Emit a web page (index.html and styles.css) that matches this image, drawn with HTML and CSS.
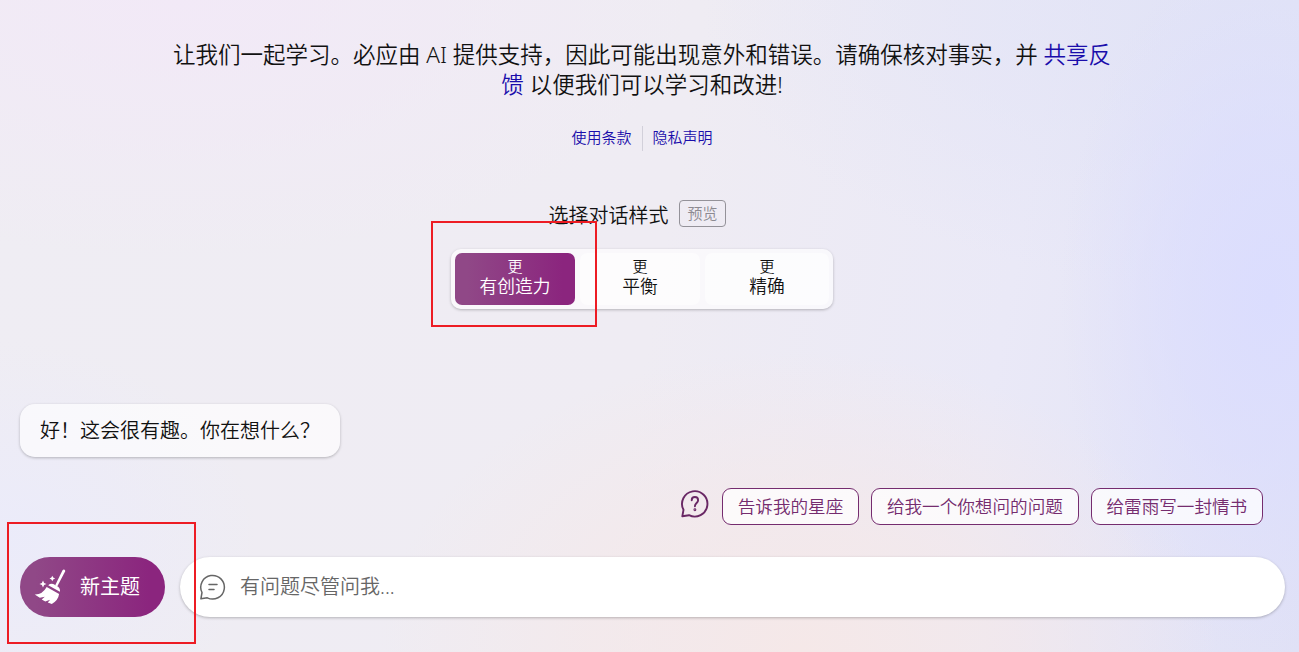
FILE: index.html
```
<!DOCTYPE html>
<html lang="zh-CN">
<head>
    <meta charset="UTF-8">
    <meta name="viewport" content="width=device-width, initial-scale=1.0">
    <title>必应聊天</title>
    <link rel="stylesheet" href="styles.css">
</head>
<body>
    <div class="page">
        <div class="welcome">
            <p class="disclaimer">让我们一起学习。必应由 AI 提供支持，因此可能出现意外和错误。请确保核对事实，并 <a href="#">共享反馈</a> 以便我们可以学习和改进!</p>
            <div class="legal">
                <a href="#">使用条款</a>
                <a href="#">隐私声明</a>
            </div>
            <div class="tone-title">
                <span>选择对话样式</span>
                <span class="preview">预览</span>
            </div>
            <div class="tones">
                <button class="tone active"><span>更</span><strong>有创造力</strong></button>
                <button class="tone"><span>更</span><strong>平衡</strong></button>
                <button class="tone tone-wide"><span>更</span><strong>精确</strong></button>
            </div>
        </div>

        <div class="message">好！这会很有趣。你在想什么？</div>

        <div class="suggestions">
            <svg class="help-icon" width="30" height="30" viewBox="0 0 30 30" fill="none" stroke="#692764" stroke-width="1.9" stroke-linecap="round" stroke-linejoin="round">
                <path d="M2.3 27.3 3.5 20.8A12.7 12.7 0 1 1 9 26.2Z"/>
                <path d="M11.7 11.2c0-4.3 6.4-4.3 6.4 0 0 2.600-3.200 3-3.200 6"/>
                <circle cx="14.9" cy="20.8" r=".5"/>
            </svg>
            <button class="chip">告诉我的星座</button>
            <button class="chip">给我一个你想问的问题</button>
            <button class="chip">给雷雨写一封情书</button>
        </div>

        <div class="bar">
            <button class="new-topic">
                <svg width="32" height="36" viewBox="0 0 32 36" fill="#fff">
                    <path d="M28.4 1.6q1-1.4 2.1-.9t.6 1.9L23.2 17.4l-2-1.2Z"/>
                    <path d="M14.2 16.2q3-2.5 6.5-.5l3 1.8q2.8 2 2.2 5.3Z"/>
                    <path d="M12.7 18.1 25.1 25q-.8 6.3-7.3 9.9l-4-1.5 2.3-2.6-4.8 1.7-3.6-2 3.1-2.8-5 1-5.1-3.2q7.7.3 12-7.4Z"/>
                    <path d="m9 11.5 1.1 2.4 2.4 1.1-2.4 1.1L9 18.5l-1.1-2.4L5.5 15l2.4-1.1Z"/>
                    <path d="m18.3 6.7.9 1.9 1.9.9-1.9.9-.9 1.9-.9-1.9-1.9-.9 1.9-.9Z"/>
                </svg>
                <span>新主题</span>
            </button>
            <div class="input-box">
                <svg width="28" height="28" viewBox="0 0 28 28" fill="none" stroke="#666" stroke-width="1.5" stroke-linecap="round" stroke-linejoin="round">
                    <path d="M1.9 25.8 3 19.5A11.8 11.8 0 1 1 8.3 24.8Z"/>
                    <path d="M10 11.5h8M10 16.5h5"/>
                </svg>
                <span class="placeholder">有问题尽管问我...</span>
            </div>
        </div>

        <div class="marker marker-tone"></div>
        <div class="marker marker-topic"></div>
    </div>
</body>
</html>
```
FILE: styles.css
```
* {
    margin: 0;
    padding: 0;
    box-sizing: border-box;
}

body {
    font-family: "Noto Sans", "Noto Sans CJK SC", sans-serif;
    font-weight: 350;
    color: #111;
}

a {
    color: #1a0dab;
    text-decoration: none;
}

button {
    font: inherit;
    border: none;
    cursor: pointer;
}

.page {
    position: relative;
    display: flex;
    flex-direction: column;
    height: 652px;
    padding: 40px 14px 35px 20px;
    overflow: hidden;
    background:
        radial-gradient(ellipse 210px 360px at 1270px 300px, #dbddfe 0%, #dbddfea0 45%, #dbddfe40 75%, #dbddfe00 100%),
        radial-gradient(ellipse 420px 300px at 800px 650px, #f5e8e8 0%, #f5e8e8a0 50%, #f5e8e800 100%),
        radial-gradient(ellipse 520px 260px at 180px 0, #f2e9f7 0%, #f2e9f700 100%),
        radial-gradient(ellipse 260px 200px at 0 540px, #ebebfa 0%, #ebebfa00 100%),
        radial-gradient(ellipse 600px 300px at 1299px 0, #e1e3f6 0%, #e4e4f700 100%),
        linear-gradient(100deg, #efedf3 0%, #efecf3 50%, #eae9f7 75%, #e0e1f6 100%);
}

.welcome {
    display: flex;
    flex-direction: column;
    align-items: center;
    width: 1244px;
    height: 364px;
}

.disclaimer {
    width: 950px;
    font-size: 22.5px;
    line-height: 30px;
    text-align: center;
}

.legal {
    display: flex;
    margin-top: 26px;
    font-size: 15px;
    line-height: 25px;
}

.legal a {
    height: 25px;
    line-height: 23px;
}

.legal a + a {
    margin-left: 10px;
    padding-left: 10px;
    border-left: 1px solid #d2d0da;
}

.tone-title {
    display: flex;
    align-items: center;
    gap: 11px;
    height: 30px;
    margin: 47px 0 0 -10px;
    font-size: 20px;
}

.tone-title span:first-child {
    padding-top: 2px;
}

.preview {
    height: 27px;
    padding: 0 7px;
    border: 1px solid #949299;
    border-radius: 4px;
    font-size: 15px;
    line-height: 24px;
    color: #8c8a91;
}

.tones {
    display: flex;
    gap: 5px;
    margin-top: 21px;
    padding: 4px;
    border-radius: 10px;
    background: rgba(255, 255, 255, 0.65);
    box-shadow: 0 1px 3px rgba(0, 0, 0, 0.25);
}

.tone {
    display: flex;
    flex-direction: column;
    align-items: center;
    width: 120px;
    height: 52px;
    padding-top: 3px;
    border-radius: 7px;
    background: rgba(255, 255, 255, 0.5);
    color: #111;
    font-size: 15px;
    line-height: 20px;
}

.tone-wide {
    width: 124px;
}

.tone strong {
    font-size: 17.75px;
    font-weight: 350;
}

.tone.active,
.new-topic {
    background: linear-gradient(90deg, #904887 10%, #8b257e 90%);
    color: #fff;
}

.message {
    align-self: flex-start;
    width: 320px;
    height: 53px;
    padding-left: 20px;
    border-radius: 15px;
    background: rgba(255, 255, 255, 0.65);
    box-shadow: 0 1px 3px rgba(0, 0, 0, 0.25);
    font-size: 20px;
    line-height: 53px;
}

.suggestions {
    display: flex;
    justify-content: flex-end;
    gap: 12px;
    margin: 31px 22px 0 0;
}

.help-icon {
    margin-top: 1px;
}

.chip {
    height: 37px;
    padding: 0 14.8px;
    border: 1px solid #752c6f;
    border-radius: 9px;
    background: rgba(255, 255, 255, 0.75);
    color: #752c6f;
    font-size: 17.6px;
    line-height: 35px;
}

.bar {
    display: flex;
    gap: 15px;
    margin-top: 32px;
}

.new-topic {
    display: flex;
    align-items: center;
    gap: 14px;
    width: 145px;
    height: 60px;
    padding-left: 14px;
    border-radius: 30px;
    font-size: 20px;
    font-weight: 400;
}

.new-topic span,
.placeholder {
    padding-bottom: 3px;
}

.input-box {
    display: flex;
    flex: 1;
    align-items: center;
    gap: 13px;
    height: 60px;
    padding-left: 19px;
    border-radius: 30px;
    background: #fff;
    box-shadow: 0 1px 3px rgba(0, 0, 0, 0.25);
}

.placeholder {
    font-size: 20px;
    color: #666;
}

/* red callout frames */
.marker {
    position: absolute;
    border: 2px solid #ed1c24;
}

.marker-tone {
    left: 431px;
    top: 221px;
    width: 166px;
    height: 106px;
}

.marker-topic {
    left: 7px;
    top: 522px;
    width: 189px;
    height: 122px;
}
```
